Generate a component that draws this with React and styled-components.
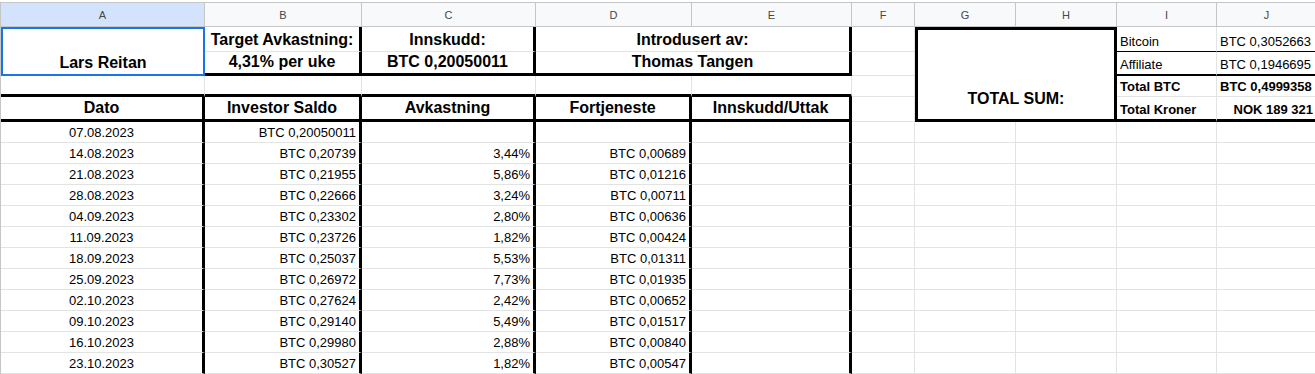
import styled, { createGlobalStyle } from 'styled-components';

const GlobalStyle = createGlobalStyle`
    body {
        margin: 0;
        background: #fff;
        overflow: hidden;
        font-family: "Liberation Sans", Arial, sans-serif;
        color: #000;
    }
`;

const lines = {
    thin: '1px solid #e2e3e3',
    black: '1px solid #000',
    medium: '2px solid #000',
    thick: '3px solid #000',
};

const justify = { left: 'flex-start', center: 'center', right: 'flex-end' };

const Sheet = styled.div`
    margin-top: 2px;
    border-top: 1px solid #c4c7c5;
    border-left: 1px solid #c4c7c5;
    display: grid;
    grid-template-columns: 204px 157px 174px 156px 160px 63px 101px 101px 100px 100px;
    grid-template-rows: 24px 25px 24px 21px 25px repeat(12, 21px);
    width: max-content;
`;

const ColHead = styled.div`
    display: flex;
    align-items: center;
    justify-content: center;
    background: ${(p) => (p.$active ? '#d3e3fd' : '#f8f9fa')};
    border-right: 1px solid #c4c7c5;
    border-bottom: 1px solid #c4c7c5;
    font-size: 11px;
    color: #444746;
`;

const Cell = styled.div`
    grid-column: span ${(p) => p.$cols || 1};
    grid-row: span ${(p) => p.$rows || 1};
    display: flex;
    align-items: flex-end;
    justify-content: ${(p) => justify[p.$align || 'left']};
    min-width: 0;
    padding: 0 3px 2px;
    border-right: ${(p) => lines[p.$r || 'thin']};
    border-bottom: ${(p) => lines[p.$b || 'thin']};
    font-size: ${(p) => (p.$big ? '16px' : '13px')};
    font-weight: ${(p) => (p.$bold ? 700 : 400)};
    white-space: nowrap;
    overflow: hidden;
`;

const Selected = styled(Cell)`
    border: 2px solid #1a73e8;
    padding-bottom: 2px;
`;

const TotalBox = styled(Cell)`
    border: 3px solid #000;
    padding-bottom: 11px;
`;

const columns = ['A', 'B', 'C', 'D', 'E', 'F', 'G', 'H', 'I', 'J'];

const rows = [
    ['07.08.2023', 'BTC 0,20050011', '', ''],
    ['14.08.2023', 'BTC 0,20739', '3,44%', 'BTC 0,00689'],
    ['21.08.2023', 'BTC 0,21955', '5,86%', 'BTC 0,01216'],
    ['28.08.2023', 'BTC 0,22666', '3,24%', 'BTC 0,00711'],
    ['04.09.2023', 'BTC 0,23302', '2,80%', 'BTC 0,00636'],
    ['11.09.2023', 'BTC 0,23726', '1,82%', 'BTC 0,00424'],
    ['18.09.2023', 'BTC 0,25037', '5,53%', 'BTC 0,01311'],
    ['25.09.2023', 'BTC 0,26972', '7,73%', 'BTC 0,01935'],
    ['02.10.2023', 'BTC 0,27624', '2,42%', 'BTC 0,00652'],
    ['09.10.2023', 'BTC 0,29140', '5,49%', 'BTC 0,01517'],
    ['16.10.2023', 'BTC 0,29980', '2,88%', 'BTC 0,00840'],
    ['23.10.2023', 'BTC 0,30527', '1,82%', 'BTC 0,00547'],
];

const headings = ['Dato', 'Investor Saldo', 'Avkastning', 'Fortjeneste', 'Innskudd/Uttak'];

export default function App() {
    return (
        <>
            <GlobalStyle />
            <Sheet>
                {columns.map((c) => (
                    <ColHead key={c} $active={c === 'A'}>{c}</ColHead>
                ))}

                {/* row 1 */}
                <Selected $rows={2} $align="center" $big $bold>Lars Reitan</Selected>
                <Cell $align="center" $big $bold $r="thick">Target Avkastning:</Cell>
                <Cell $align="center" $big $bold $r="thick">Innskudd:</Cell>
                <Cell $cols={2} $align="center" $big $bold $r="thick">Introdusert av:</Cell>
                <Cell />
                <TotalBox $cols={2} $rows={4} $align="center" $big $bold>TOTAL SUM:</TotalBox>
                <Cell $b="black">Bitcoin</Cell>
                <Cell $b="black">BTC 0,3052663</Cell>

                {/* row 2 */}
                <Cell $align="center" $big $bold $r="thick" $b="thick">4,31% per uke</Cell>
                <Cell $align="center" $big $bold $r="thick" $b="thick">BTC 0,20050011</Cell>
                <Cell $cols={2} $align="center" $big $bold $r="thick" $b="thick">Thomas Tangen</Cell>
                <Cell />
                <Cell $b="medium">Affiliate</Cell>
                <Cell $b="medium">BTC 0,1946695</Cell>

                {/* row 3 */}
                {headings.map((h) => (
                    <Cell key={'gap' + h} $b="thick" />
                ))}
                <Cell />
                <Cell $bold>Total BTC</Cell>
                <Cell $bold>BTC 0,4999358</Cell>

                {/* row 4 */}
                {headings.map((h) => (
                    <Cell key={h} $align="center" $big $bold $r="thick" $b="thick">{h}</Cell>
                ))}
                <Cell />
                <Cell $bold $b="thick">Total Kroner</Cell>
                <Cell $bold $b="thick" $align="right">NOK 189 321</Cell>

                {rows.map(([date, saldo, pct, profit]) => [
                    <Cell key={date + 'a'} $align="center" $r="thick">{date}</Cell>,
                    <Cell key={date + 'b'} $align="right" $r="thick">{saldo}</Cell>,
                    <Cell key={date + 'c'} $align="right" $r="thick">{pct}</Cell>,
                    <Cell key={date + 'd'} $align="right" $r="thick">{profit}</Cell>,
                    <Cell key={date + 'e'} $r="thick" />,
                    ...columns.slice(5).map((c) => <Cell key={date + c} />),
                ])}
            </Sheet>
        </>
    );
}
